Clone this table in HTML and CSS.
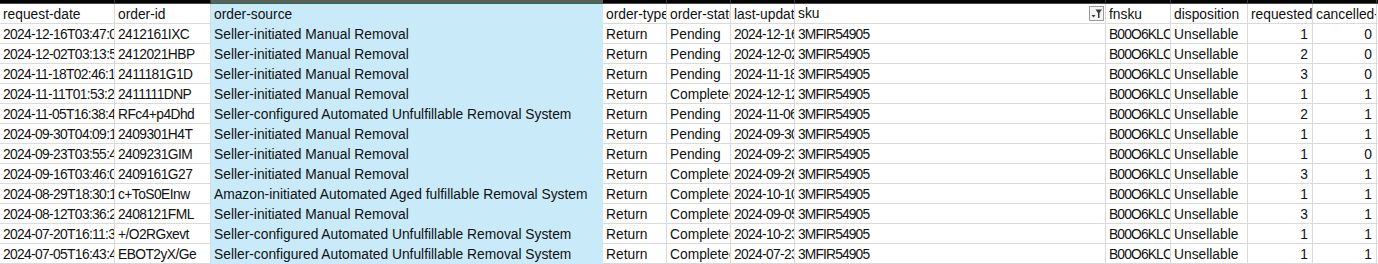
FILE: index.html
```html
<!DOCTYPE html>
<html>
<head>
<meta charset="utf-8">
<link rel="stylesheet" href="styles.css">
</head>
<body>
<div class="sheet">
  <div class="row bar">
    <div></div><div></div><div class="sel"></div><div></div><div></div><div></div><div></div><div></div><div></div><div></div><div></div><div></div>
  </div>
  <div class="row head">
    <div class="c">request-date</div><div class="c">order-id</div><div class="c sel">order-source</div><div class="c">order-type</div><div class="c">order-status</div><div class="c">last-updated-date</div>
    <div class="c filt"><span>sku</span><span class="fbtn"><svg width="13" height="13" viewBox="0 0 13 13"><polygon points="5.5,2.5 12,2.5 9.5,6 9.5,11 8,11 8,6" fill="#3c3c3c"/><polygon points="1.5,8 5.5,8 3.5,10.5" fill="#3c3c3c"/></svg></span></div>
    <div class="c">fnsku</div><div class="c">disposition</div><div class="c">requested-quantity</div><div class="c">cancelled-quantity</div><div class="c">disposed-quantity</div>
  </div>
  <div class="row">
    <div class="c">2024-12-16T03:47:05+00:00</div><div class="c">2412161IXC</div><div class="c sel">Seller-initiated Manual Removal</div><div class="c">Return</div><div class="c">Pending</div><div class="c">2024-12-16T03:47:05+00:00</div><div class="c">3MFIR54905</div><div class="c">B00O6KLCQ0</div><div class="c">Unsellable</div><div class="c num">1</div><div class="c num">0</div><div class="c num">0</div>
  </div>
  <div class="row">
    <div class="c">2024-12-02T03:13:58+00:00</div><div class="c">2412021HBP</div><div class="c sel">Seller-initiated Manual Removal</div><div class="c">Return</div><div class="c">Pending</div><div class="c">2024-12-02T03:13:58+00:00</div><div class="c">3MFIR54905</div><div class="c">B00O6KLCQ0</div><div class="c">Unsellable</div><div class="c num">2</div><div class="c num">0</div><div class="c num">0</div>
  </div>
  <div class="row">
    <div class="c">2024-11-18T02:46:12+00:00</div><div class="c">2411181G1D</div><div class="c sel">Seller-initiated Manual Removal</div><div class="c">Return</div><div class="c">Pending</div><div class="c">2024-11-18T02:46:12+00:00</div><div class="c">3MFIR54905</div><div class="c">B00O6KLCQ0</div><div class="c">Unsellable</div><div class="c num">3</div><div class="c num">0</div><div class="c num">0</div>
  </div>
  <div class="row">
    <div class="c">2024-11-11T01:53:24+00:00</div><div class="c">2411111DNP</div><div class="c sel">Seller-initiated Manual Removal</div><div class="c">Return</div><div class="c">Completed</div><div class="c">2024-12-12T10:21:40+00:00</div><div class="c">3MFIR54905</div><div class="c">B00O6KLCQ0</div><div class="c">Unsellable</div><div class="c num">1</div><div class="c num">1</div><div class="c num">0</div>
  </div>
  <div class="row">
    <div class="c">2024-11-05T16:38:41+00:00</div><div class="c">RFc4+p4Dhd</div><div class="c sel">Seller-configured Automated Unfulfillable Removal System</div><div class="c">Return</div><div class="c">Pending</div><div class="c">2024-11-06T09:14:33+00:00</div><div class="c">3MFIR54905</div><div class="c">B00O6KLCQ0</div><div class="c">Unsellable</div><div class="c num">2</div><div class="c num">1</div><div class="c num">0</div>
  </div>
  <div class="row">
    <div class="c">2024-09-30T04:09:17+00:00</div><div class="c">2409301H4T</div><div class="c sel">Seller-initiated Manual Removal</div><div class="c">Return</div><div class="c">Pending</div><div class="c">2024-09-30T04:09:17+00:00</div><div class="c">3MFIR54905</div><div class="c">B00O6KLCQ0</div><div class="c">Unsellable</div><div class="c num">1</div><div class="c num">1</div><div class="c num">0</div>
  </div>
  <div class="row">
    <div class="c">2024-09-23T03:55:40+00:00</div><div class="c">2409231GIM</div><div class="c sel">Seller-initiated Manual Removal</div><div class="c">Return</div><div class="c">Pending</div><div class="c">2024-09-23T03:55:40+00:00</div><div class="c">3MFIR54905</div><div class="c">B00O6KLCQ0</div><div class="c">Unsellable</div><div class="c num">1</div><div class="c num">0</div><div class="c num">0</div>
  </div>
  <div class="row">
    <div class="c">2024-09-16T03:46:02+00:00</div><div class="c">2409161G27</div><div class="c sel">Seller-initiated Manual Removal</div><div class="c">Return</div><div class="c">Completed</div><div class="c">2024-09-26T11:02:19+00:00</div><div class="c">3MFIR54905</div><div class="c">B00O6KLCQ0</div><div class="c">Unsellable</div><div class="c num">3</div><div class="c num">1</div><div class="c num">0</div>
  </div>
  <div class="row">
    <div class="c">2024-08-29T18:30:11+00:00</div><div class="c">c+ToS0EInw</div><div class="c sel">Amazon-initiated Automated Aged fulfillable Removal System</div><div class="c">Return</div><div class="c">Completed</div><div class="c">2024-10-10T07:45:52+00:00</div><div class="c">3MFIR54905</div><div class="c">B00O6KLCQ0</div><div class="c">Unsellable</div><div class="c num">1</div><div class="c num">1</div><div class="c num">0</div>
  </div>
  <div class="row">
    <div class="c">2024-08-12T03:36:20+00:00</div><div class="c">2408121FML</div><div class="c sel">Seller-initiated Manual Removal</div><div class="c">Return</div><div class="c">Completed</div><div class="c">2024-09-05T14:28:09+00:00</div><div class="c">3MFIR54905</div><div class="c">B00O6KLCQ0</div><div class="c">Unsellable</div><div class="c num">3</div><div class="c num">1</div><div class="c num">0</div>
  </div>
  <div class="row">
    <div class="c">2024-07-20T16:11:37+00:00</div><div class="c">+/O2RGxevt</div><div class="c sel">Seller-configured Automated Unfulfillable Removal System</div><div class="c">Return</div><div class="c">Completed</div><div class="c">2024-10-23T05:33:48+00:00</div><div class="c">3MFIR54905</div><div class="c">B00O6KLCQ0</div><div class="c">Unsellable</div><div class="c num">1</div><div class="c num">1</div><div class="c num">0</div>
  </div>
  <div class="row">
    <div class="c">2024-07-05T16:43:49+00:00</div><div class="c">EBOT2yX/Ge</div><div class="c sel">Seller-configured Automated Unfulfillable Removal System</div><div class="c">Return</div><div class="c">Completed</div><div class="c">2024-07-23T12:16:25+00:00</div><div class="c">3MFIR54905</div><div class="c">B00O6KLCQ0</div><div class="c">Unsellable</div><div class="c num">1</div><div class="c num">1</div><div class="c num">0</div>
  </div>
</div>
</body>
</html>
```

FILE: styles.css
```css
html, body {
  margin: 0;
  padding: 0;
  background: #ffffff;
  overflow: hidden;
}

.sheet {
  width: 1378px;
  overflow: hidden;
  font-family: "Liberation Sans", Arial, sans-serif;
  font-size: 13.8px;
  color: #111111;
}

.row {
  display: grid;
  grid-template-columns: 115px 96px 392px 64px 64px 64px 311px 65px 77px 65px 64px 80px;
}

.c {
  box-sizing: border-box;
  height: 20px;
  line-height: 19px;
  padding: 1px 2px 0 3px;
  border-right: 1px solid #dadada;
  border-bottom: 1px solid #dadada;
  white-space: nowrap;
  overflow: hidden;
  background: #ffffff;
}

/* Aptos-like narrower figures in code/date columns */
.row:not(.head) > .c:nth-child(1),
.row:not(.head) > .c:nth-child(6) {
  letter-spacing: -0.65px;
}

.row:not(.head) > .c:nth-child(2) {
  letter-spacing: -0.55px;
}

.row:not(.head) > .c:nth-child(7),
.row:not(.head) > .c:nth-child(8) {
  letter-spacing: -0.85px;
}

.c.sel {
  background: #c8eaf9;
  border-right-color: #c8eaf9;
  border-bottom-color: #c8eaf9;
}

.c.num {
  text-align: right;
  padding: 1px 4px 0 2px;
}

.c.filt {
  display: flex;
  align-items: center;
  justify-content: space-between;
  padding-top: 0;
  padding-right: 1px;
}

.fbtn {
  box-sizing: border-box;
  width: 15px;
  height: 15px;
  border: 1px solid #9a9a9a;
  background: #f4f4f4;
  display: flex;
  align-items: center;
  justify-content: center;
}

.fbtn svg {
  display: block;
}

.bar > div {
  box-sizing: border-box;
  height: 4px;
  background: #050505;
  border-right: 1px solid #3a3a3a;
  border-bottom: 1px solid #4a4a4a;
}

.bar > div.sel {
  background: #5d5d5d;
  border-right-color: #5d5d5d;
  border-bottom-color: #1f7a45;
}
```
